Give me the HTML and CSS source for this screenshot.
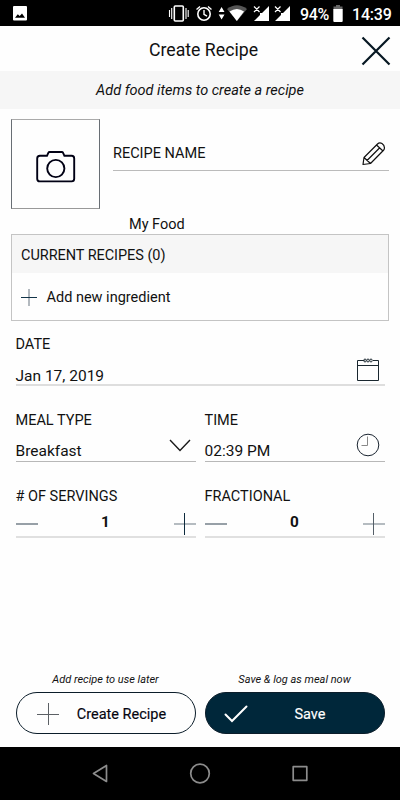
FILE: index.html
```html
<!DOCTYPE html>
<html lang="en">
<head>
<meta charset="utf-8">
<title>Create Recipe</title>
<link rel="stylesheet" href="styles.css">
</head>
<body>
<div class="screen">
  <div class="status">
    <svg class="status-icons" width="300" height="26" viewBox="0 0 300 26">
      <path fill="#fff" fill-rule="evenodd" d="M14 6h12q1 0 1 1v12.500q0 1-1 1h-12q-1 0-1-1v-12.500q0-1 1-1zM15 17.700h10l-3-4.200-2.300 2.500-1.900-1.800z"/>
      <g fill="none" stroke="#fff">
        <rect x="174.300" y="6" width="9" height="15" rx="1" stroke-width="1.600"/>
        <path d="M171.700 8v11M169.500 10v7M186 8v11M188.200 10v7" stroke-width="1.100"/>
        <circle cx="204" cy="14" r="6.200" stroke-width="1.600"/>
        <path d="M204 10v4.300l3 1.800M196.500 9.500l3.500-3M211.500 9.500l-3.500-3" stroke-width="1.400"/>
      </g>
      <path fill="#fff" d="M221.600 7l2.900 5h-5.800zM221.600 19.500l2.900-5h-5.800z"/>
      <path fill="#555" d="M227 9q10-7.500 20 0l-10 12z"/>
      <path fill="#fff" d="M229.500 11.500q7.500-5 14.500 0l-7.200 9.500z"/>
      <path fill="#fff" d="M269 6v15h-15l6-6v-2h2zM290 6v15h-15l6-6v-2h2z"/>
      <path stroke="#fff" stroke-width="1.200" d="M254 6.500l5.500 5.500M259.500 6.500l-5.500 5.500M275 6.500l5.500 5.500M280.500 6.500l-5.500 5.500"/>
    </svg>
    <span class="battery-text">94%</span>
    <svg class="battery" width="10" height="17" viewBox="0 0 10 17"><path fill="#666" d="M3 0h4v1.500h2.500v3h-9v-3h2.500z"/><path fill="#fff" d="M.3 4h9.400v12q0 1-1 1h-7.400q-1 0-1-1z"/></svg>
    <span class="clock">14:39</span>
  </div>
  <header class="header">
    <h1>Create Recipe</h1>
    <svg class="close" width="30" height="30" viewBox="0 0 30 30"><path d="M1.500 1.500l27 27M28.500 1.500l-27 27" stroke="#061722" stroke-width="2.200"/></svg>
  </header>
  <p class="hint">Add food items to create a recipe</p>

  <div class="recipe">
    <div class="photo">
      <svg width="40" height="32" viewBox="0 0 40 32" fill="none" stroke="#000014" stroke-width="1.900"><path d="M4 4.800h7l1.300-2.900q.4-.9 1.400-.9h12q1 0 1.400.9l1.300 2.900h7.200q2.600 0 2.600 2.600v20.400q0 2.600-2.600 2.600h-31.800q-2.600 0-2.600-2.600v-20.400q0-2.600 2.800-2.600z"/><circle cx="19.800" cy="17.500" r="8.600"/></svg>
    </div>
    <div class="name">
      <span>RECIPE NAME</span>
      <svg width="24" height="24" viewBox="0 0 24 24" fill="none" stroke="#111" stroke-width="1.200" stroke-linejoin="round"><path d="M1 22.500l1-7L15.500 2q2-1.900 4.500-.5 3 2 2.300 5.300-.2.800-1 1.700L8.500 21.500zM2 15.500l6.500 6M14.500 3l6.500 6M5 18.500L17.500 6"/></svg>
    </div>
  </div>

  <div class="my-food">My Food</div>
  <section class="foods">
    <div class="foods-title"><span>CURRENT RECIPES (0)</span></div>
    <div class="foods-add">
      <svg width="16" height="17" viewBox="0 0 16 17"><path d="M8 0v17" stroke="#a0a8af" stroke-width="1.600"/><path d="M0 8.500h16" stroke="#123449"/></svg>
      <span class="add-text">Add new ingredient</span>
    </div>
  </section>

  <div class="fields">
    <div class="field wide">
      <label>DATE</label>
      <div class="value soft"><span class="date">Jan 17, 2019</span>
        <svg class="calendar" width="24" height="24" viewBox="0 0 24 24" fill="none" stroke="#1a272f"><path d="M7 2.500H1.500v20h21v-20H17M1 7.500h22"/><path stroke-width=".9" d="M6.500 2.500h2"/><ellipse cx="9" cy="2.500" rx="1.200" ry="1.500"/><ellipse cx="12" cy="2.500" rx="1.200" ry="1.500"/><ellipse cx="15" cy="2.500" rx="1.200" ry="1.500"/></svg>
      </div>
    </div>
    <div class="field">
      <label>MEAL TYPE</label>
      <div class="value"><span>Breakfast</span>
        <svg class="chevron" width="22" height="13" viewBox="0 0 22 13"><path d="M1 1l10 10.500L21 1" fill="none" stroke="#1a1a1a" stroke-width="1.400"/></svg>
      </div>
    </div>
    <div class="field">
      <label>TIME</label>
      <div class="value"><span class="time">02:39 PM</span>
        <svg class="time-icon" width="24" height="24" viewBox="0 0 24 24" fill="none"><circle cx="12" cy="12" r="10.800" stroke="#1a2430"/><path d="M11.500 3.500v9H5.500" stroke="#888"/></svg>
      </div>
    </div>
    <div class="field">
      <label class="servings">#&nbsp;OF SERVINGS</label>
      <div class="stepper">
        <svg width="22" height="22" viewBox="0 0 22 22"><path d="M0 11h22" stroke="#8c969e" stroke-width="1.800"/></svg>
        <b>1</b>
        <svg width="22" height="22" viewBox="0 0 22 22"><path d="M0 11h22" stroke="#a3abb1" stroke-width="1.600"/><path d="M10.500 0v22" stroke="#0d2a3d"/></svg>
      </div>
    </div>
    <div class="field">
      <label>FRACTIONAL</label>
      <div class="stepper">
        <svg width="22" height="22" viewBox="0 0 22 22"><path d="M0 11h22" stroke="#8c969e" stroke-width="1.800"/></svg>
        <b>0</b>
        <svg width="22" height="22" viewBox="0 0 22 22"><path d="M0 11h22" stroke="#a3abb1" stroke-width="1.600"/><path d="M10.500 0v22" stroke="#555f68"/></svg>
      </div>
    </div>
  </div>

  <div class="actions">
    <div class="action">
      <em>Add recipe to use later</em>
      <button class="btn"><svg width="22" height="22" viewBox="0 0 22 22"><path d="M0 11.500h22M11.500 0v22" stroke="#5c6065" stroke-width="1"/></svg><span class="create-text">Create Recipe</span></button>
    </div>
    <div class="action">
      <em>Save &amp; log as meal now</em>
      <button class="btn dark"><svg width="24" height="18" viewBox="0 0 24 18"><path d="M1.500 9.500l6.500 6.500L22.500 1.500" fill="none" stroke="#fff" stroke-width="2" stroke-linecap="round"/></svg><span>Save</span></button>
    </div>
  </div>

  <nav class="nav">
    <svg width="400" height="53" viewBox="0 0 400 53" fill="none" stroke="#8c8c8c" stroke-width="1.700" stroke-linejoin="round"><path d="M93.500 26.500l13-8v16z"/><circle cx="200" cy="26.500" r="9.300"/><rect x="293.200" y="19.700" width="13.600" height="13.600"/></svg>
  </nav>
</div>
</body>
</html>
```
FILE: styles.css
```css
* { box-sizing: border-box; }
body { margin: 0; background: #fefefe; font-family: Roboto, sans-serif; color: #111; font-size: 14.5px; }
svg { display: block; flex: none; }
.screen { width: 400px; height: 800px; display: flex; flex-direction: column; overflow: hidden; }
.status { height: 26px; background: #000; color: #fff; display: flex; align-items: center; font-size: 16px; font-weight: 500; line-height: 26px; }
.battery-text { width: 33px; padding-top: 3px; white-space: nowrap; letter-spacing: -.4px; }
.battery { margin-top: 1px; }
.clock { margin-left: 9px; padding-top: 3px; letter-spacing: -.2px; }
.header { height: 45px; display: grid; grid-template-columns: 1fr 30px; align-items: center; padding: 4px 9px 0 39px; }
h1 { margin: 0; padding: 0 0 2px 7px; text-align: center; font-size: 17.7px; font-weight: 400; line-height: 40px; }
.hint { height: 38px; margin: 0; background: #f6f6f6; text-align: center; font-style: italic; line-height: 40px; }
.recipe { display: flex; gap: 13px; padding: 10px 11px 0; }
.photo { width: 89px; height: 90px; border: 1px solid #686e74; border-top-color: #aaa; border-bottom-color: #999; display: flex; align-items: center; justify-content: center; padding-top: 5px; }
.name { flex: 1; height: 52px; border-bottom: 1px solid #bbb; display: flex; justify-content: space-between; padding: 23px 3px 0 0; line-height: 24px; }
.my-food { padding-left: 129px; height: 25px; line-height: 31px; }
.foods { margin: 0 11px; height: 87px; border: 1px solid #c4c4c4; }
.foods-title { height: 38px; background: #f6f6f6; padding-left: 9px; line-height: 41px; letter-spacing: -.05px; }
.foods-add { height: 47px; display: flex; align-items: center; gap: 9px; padding: 1px 0 0 9px; }
.add-text { padding-left: .5px; }
.fields { display: grid; grid-template-columns: 180px 180px; column-gap: 9px; padding: 13px 15.5px 0; grid-template-rows: 76px 76px 76px; }
.wide { grid-column: span 2; }
label { display: block; height: 20px; line-height: 22px; }
.value { height: 32px; border-bottom: 1px solid #b8b8b8; display: flex; justify-content: space-between; font-size: 15.5px; line-height: 43px; }
.value span { height: 30px; }
.soft { border-bottom: 2px solid #dedede; line-height: 44px; }
.calendar { margin: 4px 5px 0 0; }
.time-icon { margin: 3px 5px 0 0; }
.chevron { margin: 9px 5px 0 0; }
.stepper { height: 32px; border-bottom: 2px solid #e0e0e0; display: flex; justify-content: space-between; padding-top: 7px; font-size: 15.3px; line-height: 18px; }
.actions { margin-top: auto; display: flex; gap: 9px; padding: 0 15.500px 13px; }
.action { width: 180px; }
em { display: block; text-align: center; font-size: 11px; line-height: 17px; margin-bottom: 4px; }
.btn { width: 180px; height: 42px; border: 1px solid #0b1d2a; border-radius: 21px; background: #fefefe; color: #050510; font: 400 14.500px Roboto, sans-serif; -webkit-text-stroke: .15px; display: flex; align-items: center; padding: 2px 0 0 20px; }
.btn span { flex: 1; text-align: center; padding-top: 1px; }
.btn .create-text { padding-right: 10px; }
.dark { background: #00273a; color: #fff; padding-left: 18px; }
.btn.dark span { padding-right: 11px; }
.nav { height: 53px; background: #000; }
```
